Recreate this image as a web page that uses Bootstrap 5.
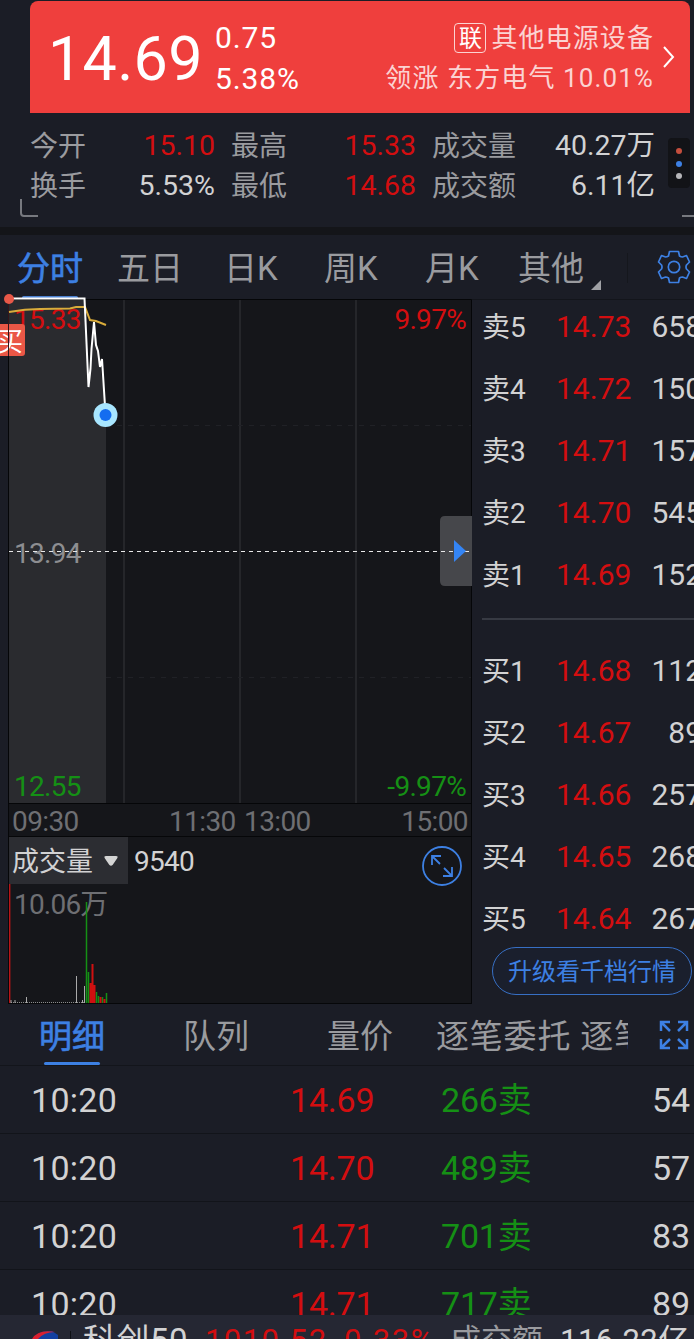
<!DOCTYPE html>
<html lang="zh-CN" data-bs-theme="dark">
<head>
<meta charset="utf-8">
<meta name="viewport" content="width=device-width, initial-scale=1">
<title>分时行情</title>
<link rel="stylesheet" href="https://cdn.jsdelivr.net/npm/bootstrap@5.3.0/dist/css/bootstrap.min.css">
<style>
:root{--bg:#1b1d26;--panel:#15161a;--up:#d30e10;--down:#159015;--blue:#3d80e3;--txt:#d2d2d3;--dim:#9a9b9f;--faint:#6e6f73}
html,body{height:1339px;overflow:hidden}
body{background:var(--bg);color:var(--txt);font-family:Roboto,"Noto Sans CJK SC",sans-serif;font-size:28px;line-height:40px;white-space:nowrap}
.screen{width:694px;height:1339px}
.up{color:var(--up)}.down{color:var(--down)}.dim{color:var(--dim)}.faint{color:var(--faint)}.blue{color:var(--blue)}
.topzone{height:227px;padding-top:1px}
.quote{height:112px;width:660px;margin-left:30px;background:#ef3f3d;border-radius:8px 8px 0 0;color:#fff;padding:0 15px 0 18px}
.quote-price{font-size:61px;letter-spacing:.3px;width:167px;line-height:117px}
.quote-diff{font-size:30px;line-height:41px;letter-spacing:.9px}
.quote-info{font-size:26px;line-height:41px;letter-spacing:1.1px;color:#fbd3d2;position:relative}
.quote-info>div{margin-right:-1px}
.quote-info>div:first-child{padding-top:1px;height:41px}
.lian{font-size:23px;width:32px;height:30px;line-height:29px;letter-spacing:0;border:1px solid #fbd3d2;border-radius:4px;margin-right:5px;color:#fff}
.stats{display:grid;grid-template-columns:92px 93px 109px 92px 101px 138px;margin:14px 0 0 30px;width:625px}
.stats span:nth-child(even){text-align:right;font-size:28.5px;line-height:38px}
.stats .g{padding-left:16px}
.more{right:4px;top:138px;width:22px;height:50px;border-radius:4px;background:#121317;padding:10px 0 9px}
.more i{width:6px;height:6px;border-radius:50%}
.band{height:8px;background:#141519}
.tabs{height:64px;font-size:33px;line-height:67px}
.current{-webkit-text-stroke:.6px var(--blue)}
.market{height:705px}
.plot{width:472px}
.plot-area{height:505px}
.plot-label{font-size:28px;line-height:36px;letter-spacing:-.7px}
.axis{height:32px;margin-left:8px;width:464px;background:var(--panel);border-right:1px solid #060709;border-left:1px solid #060709;padding:0 3px 0 3px;line-height:35px;font-size:28px;letter-spacing:-.6px}
.volume{height:168px;margin-left:8px;width:464px;background:var(--panel);border:1px solid #060709}
.vol-pick{width:119px;height:47px;background:#2c2d32;font-size:27px;line-height:50px;padding-left:3px}
.book{width:222px;padding-left:10px;overflow:hidden;border-top:1px solid #13151b}
.level{height:62px;line-height:62px}
.level span{flex:none}
.level .n{width:74px;line-height:64px}.level .p{width:76px;font-size:30px}.level .q{width:70px;text-align:right;font-size:30px}
.split{height:34px;padding-top:12px}
.split div{height:2px;background:#373a43}
.upgrade{width:200px;height:48px;margin:-3px 0 0 10px;border:1px solid #376fc4;border-radius:24px;color:var(--blue);font-size:24px;line-height:1;padding:2px 0 0;background:#1a1f2d}
.subtabs{height:62px;font-size:33px;line-height:65px;border-bottom:1px solid #13151b}
.tick{height:68px;border-bottom:1px solid #12141a;line-height:69px;font-size:34px}
.tick span{letter-spacing:-.2px}
.tick .t{margin-left:31px;width:259px;letter-spacing:.3px}
.ticker{height:24px;background:#252733;line-height:52px;overflow:hidden}
.ticker span{flex:none}
</style>
</head>
<body>
<main class="screen d-flex flex-column overflow-hidden">
  <header class="topzone position-relative flex-shrink-0">
    <div class="quote d-flex">
      <div class="quote-price">14.69</div>
      <div class="quote-diff pt-3"><div>0.75</div><div>5.38%</div></div>
      <div class="quote-info ms-auto text-end pt-3">
        <div class="d-flex justify-content-end align-items-center"><span class="lian text-center">联</span>其他电源设备</div>
        <div>领涨 东方电气 10.01%</div>
      </div>
      <svg class="ms-2" width="14" height="112" fill="none" stroke="#fff" stroke-width="2"><path d="M3 46l9 10-9 10"/></svg>
    </div>
    <div class="stats">
      <span class="dim">今开</span><span class="up">15.10</span><span class="dim g">最高</span><span class="up">15.33</span><span class="dim g">成交量</span><span>40.27万</span>
      <span class="dim">换手</span><span>5.53%</span><span class="dim g">最低</span><span class="up">14.68</span><span class="dim g">成交额</span><span>6.11亿</span>
    </div>
    <div class="more position-absolute d-flex flex-column align-items-center justify-content-between"><i style="background:#c44e3d"></i><i style="background:#3d80e3"></i><i style="background:#b5b5b8"></i></div>
    <svg class="position-absolute start-0 top-0" width="694" height="227" fill="none" stroke="#77797f" stroke-width="2"><path d="M21 199v14q0 3 3 3h14M682 216h12"/></svg>
  </header>
  <div class="band flex-shrink-0"></div>
  <nav class="tabs d-flex flex-shrink-0 dim position-relative">
    <span class="blue current" style="margin-left:17px;width:100px">分时</span><span style="width:107px">五日</span><span style="width:100px">日K</span><span style="width:101px">周K</span><span style="width:93px">月K</span><span>其他</span>
    <svg class="position-absolute start-0 top-0" width="694" height="64"><rect x="22" y="61" width="56" height="4" rx="1.500" fill="#4a80d0"/><path d="M601 45v10h-10z" fill="#a0a1a5"/><path d="M627.500 18v30" stroke="#15171d"/>
      <g transform="translate(674 32)" fill="none" stroke="#3d80e3" stroke-width="1.700" stroke-linejoin="round"><circle r="5.700"/><path d="M-4.500-15.500H4.500L5.500-11Q7-10 8.500-10L12.500-11.500L15.500-5L12.500-2Q11.500 0 12.500 2L15.500 5L12.500 11.500L8.500 10Q7 10 5.500 11L4.500 15.500H-4.500L-5.500 11Q-7 10-8.500 10L-12.500 11.500L-15.500 5L-12.500 2Q-11.500 0-12.500-2L-15.500-5L-12.500-11.500L-8.500-10Q-7-10-5.500-11Z"/></g></svg>
  </nav>
  <section class="market d-flex flex-shrink-0">
    <div class="plot">
      <div class="plot-area position-relative">
        <svg class="position-absolute start-0 top-0 overflow-visible" width="472" height="505">
          <rect x="8" width="464" height="505" fill="#15161a"/>
          <path d="M9 0H85L88 87L94 23L100 65L106 107V505H9z" fill="#2a2b2f"/>
          <path d="M124 1V504M240 1V504M356 1V504" stroke="#2b2c31" stroke-width="1.500"/>
          <path d="M106 126.500H471M106 378.500H471" stroke="#202126" stroke-dasharray="5 6"/>
          <path d="M8.500 505V.5H471.500V505M8 504.500H472" fill="none" stroke="#050608"/>
        </svg>
        <div class="plot-label position-absolute d-flex flex-column justify-content-between" style="left:14px;top:3px;height:503px"><span class="up">15.33</span><span style="color:#8d8e91">13.94</span><span class="down">12.55</span></div>
        <div class="plot-label position-absolute d-flex flex-column justify-content-between text-end" style="right:6px;top:3px;height:503px"><span class="up">9.97%</span><span class="down">-9.97%</span></div>
        <svg class="position-absolute start-0 top-0 overflow-visible" width="472" height="505">
          <rect x="-12" y="25" width="37" height="32" rx="3" fill="#ea5746"/><text x="-3" y="52" font-size="26" fill="#fff">买</text>
          <path d="M8.500 0V57" stroke="#34161a"/>
          <path d="M9 13Q25 10 40 10L70 9.500L76 8H85L90 21L96 22L106 26" fill="none" stroke="#d9ac3b" stroke-width="2"/>
          <path d="M9-.5H84.500L88.500 88Q91 70 91.500 50L94 23L96 46L98 52L100 68L102 60L105 107" fill="none" stroke="#fff" stroke-width="2"/>
          <circle cx="9" cy="0" r="5" fill="#e85848"/>
          <circle cx="105.500" cy="116" r="12" fill="#a8e6ff"/><circle cx="105.500" cy="116" r="6" fill="#146df0"/>
          <path d="M472 217H445q-5 0-5 5v60q0 5 5 5h27z" fill="#46474b"/>
          <path d="M9 252.500H470" stroke="#e8e8e8" stroke-dasharray="4 4"/><path d="M454 241v22l12-11z" fill="#3485f5"/>
        </svg>
      </div>
      <div class="axis d-flex faint"><span style="width:157px">09:30</span><span style="width:75px">11:30</span><span>13:00</span><span class="ms-auto">15:00</span></div>
      <div class="volume position-relative">
        <div class="d-flex"><div class="vol-pick">成交量<svg style="margin-left:9px" width="20" height="22"><path d="M4 3h10q2.500 0 1.200 2.300l-4.400 6.500q-1.800 2-3.600 0l-4.400-6.500q-1.200-2.300 1.200-2.300z" fill="#d4d4d4"/></svg></div><span style="margin-left:6px;line-height:49px;letter-spacing:-.7px">9540</span>
        <svg class="ms-auto" style="margin-right:8px;margin-top:8px" width="42" height="42" fill="none" stroke="#3d80e3" stroke-width="1.800"><circle cx="21" cy="21" r="19"/><path d="M19 19l-8-8m0 9v-9h9M23 23l8 8m0-9v9h-9"/></svg></div>
        <div class="faint" style="margin:-2px 0 0 5px;letter-spacing:-.8px">10.06万</div>
        <svg class="position-absolute start-0 bottom-0" width="462" height="119">
          <rect width="1.400" height="119" fill="#b81518"/>
          <path d="M2 118.500H75" stroke="#8b8b8d" stroke-dasharray="1 1"/><path d="M2 116v3M6 116v3M17.500 113v6M67.500 92v27M73.500 116v3M75.500 102v17" stroke="#aaa"/>
          <path d="M77.500 18V120M79.500 88V120M87.500 108V120M89.500 112V120M93.500 113V120M97.500 109V120" stroke="#159015" stroke-width="1.500"/>
          <path d="M81.500 99V120M83.500 80V120M85.500 101V120M91.500 113V120M95.500 115V120" stroke="#d01010" stroke-width="2"/>
        </svg>
      </div>
    </div>
    <div class="book">
      <div style="margin-top:-4px">
        <div class="level d-flex"><span class="n">卖5</span><span class="p up">14.73</span><span class="q">658</span></div>
        <div class="level d-flex"><span class="n">卖4</span><span class="p up">14.72</span><span class="q">150</span></div>
        <div class="level d-flex"><span class="n">卖3</span><span class="p up">14.71</span><span class="q">157</span></div>
        <div class="level d-flex"><span class="n">卖2</span><span class="p up">14.70</span><span class="q">545</span></div>
        <div class="level d-flex"><span class="n">卖1</span><span class="p up">14.69</span><span class="q">152</span></div>
        <div class="split"><div></div></div>
        <div class="level d-flex"><span class="n">买1</span><span class="p up">14.68</span><span class="q">112</span></div>
        <div class="level d-flex"><span class="n">买2</span><span class="p up">14.67</span><span class="q">89</span></div>
        <div class="level d-flex"><span class="n">买3</span><span class="p up">14.66</span><span class="q">257</span></div>
        <div class="level d-flex"><span class="n">买4</span><span class="p up">14.65</span><span class="q">268</span></div>
        <div class="level d-flex"><span class="n">买5</span><span class="p up">14.64</span><span class="q">267</span></div>
      </div>
      <button class="btn upgrade" type="button">升级看千档行情</button>
    </div>
  </section>
  <nav class="subtabs d-flex flex-shrink-0 dim position-relative">
    <span class="blue current" style="margin-left:39px;width:144px">明细</span><span style="width:144px">队列</span><span style="width:109px">量价</span><span class="overflow-hidden" style="width:192px;letter-spacing:.8px">逐笔委托 逐笔</span>
    <svg class="position-absolute start-0 top-0" width="694" height="61"><rect x="44" y="58" width="56" height="3" rx="1.500" fill="#3d80e3"/><g fill="none" stroke="#3d80e3" stroke-width="2.500"><path d="M670 27l-9-9m0 9v-9h9M678 27l9-9m-9 0h9v9M670 35l-9 9m0-9v9h9M678 35l9 9m-9 0h9v-9"/></g></svg>
  </nav>
  <section class="flex-grow-1 overflow-hidden">
    <div class="tick d-flex"><span class="t">10:20</span><span class="up" style="width:151px">14.69</span><span class="down" style="width:211px">266卖</span><span>54</span></div>
    <div class="tick d-flex"><span class="t">10:20</span><span class="up" style="width:151px">14.70</span><span class="down" style="width:211px">489卖</span><span>57</span></div>
    <div class="tick d-flex"><span class="t">10:20</span><span class="up" style="width:151px">14.71</span><span class="down" style="width:211px">701卖</span><span>83</span></div>
    <div class="tick d-flex"><span class="t">10:20</span><span class="up" style="width:151px">14.71</span><span class="down" style="width:211px">717卖</span><span>89</span></div>
  </section>
  <footer class="ticker d-flex flex-shrink-0">
    <svg style="margin-left:30px;width:53px" height="24"><path d="M3 24Q8 15 22 16l6 4v4z" fill="#1440a0"/><path d="M2 24Q8 14 25 17Q14 17 8 24z" fill="#d92030"/><path d="M40.500 16v8" stroke="#0e1015"/></svg>
    <span style="width:122px;font-size:33px;letter-spacing:.5px">科创50</span><span class="up" style="width:139px;font-size:31px;letter-spacing:1.4px">1010.52</span><span class="up" style="width:106px;font-size:31px;letter-spacing:1.6px">0.33%</span><span class="dim" style="width:110px;font-size:31px">成交额</span><span style="font-size:31px;letter-spacing:.5px">116.22亿</span>
  </footer>
</main>
<script src="https://cdn.jsdelivr.net/npm/bootstrap@5.3.0/dist/js/bootstrap.bundle.min.js"></script>
</body>
</html>
